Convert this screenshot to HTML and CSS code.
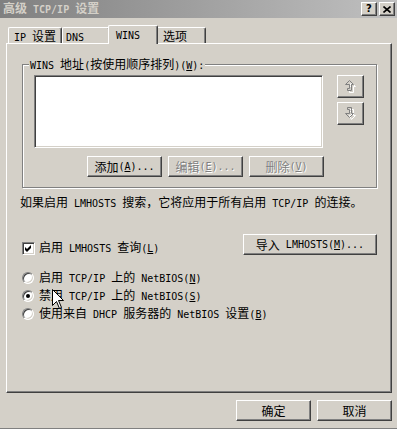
FILE: index.html
```html
<!DOCTYPE html>
<html lang="zh-CN">
<head>
<meta charset="utf-8">
<title>高级 TCP/IP 设置</title>
<link rel="stylesheet" href="styles.css">
</head>
<body>
<div class="window">
  <div class="titlebar">
    <span class="title">高级<span class="l"> TCP/IP </span>设置</span>
    <div class="caption-btns">
      <span class="cbtn help">?</span>
      <span class="cbtn close"><svg width="8" height="7" viewBox="0 0 8 7"><path d="M0.5 0.5 L7.5 6.5 M7.5 0.5 L0.5 6.5" stroke="#000" stroke-width="1.6" fill="none"/></svg></span>
    </div>
  </div>

  <div class="tabs">
    <div class="tab tab-ip"><span class="l">IP </span>设置</div>
    <div class="tab tab-dns"><span class="l">DNS</span></div>
    <div class="tab tab-wins active"><span class="l">WINS</span></div>
    <div class="tab tab-opt">选项</div>
  </div>

  <div class="panel">
    <div class="group">
      <div class="legend"><span class="legend-text"><span class="l">WINS </span>地址<span class="l">(</span>按使用顺序排列<span class="l">)(<u>W</u>):</span></span></div>
      <div class="list-row">
        <div class="listbox"></div>
        <div class="arrows">
          <button class="btn arrow" type="button">
            <svg width="11" height="13" viewBox="0 0 11 13">
              <path d="M5.5 1.5 L9.5 5.5 L7.5 5.5 L7.5 11.5 L3.5 11.5 L3.5 9.5 L5.5 9.5 L5.5 5.5 L3.5 5.5 Z" transform="translate(1,1)" stroke="#fff" fill="none"/>
              <path d="M4.5 0.5 L8.5 4.5 L6.5 4.5 L6.5 10.5 L2.5 10.5 L2.5 8.5 L4.5 8.5 L4.5 4.5 L0.5 4.5 Z" stroke="#808080" fill="none"/>
            </svg>
          </button>
          <button class="btn arrow" type="button">
            <svg width="11" height="13" viewBox="0 0 11 13">
              <path d="M5.5 11.5 L9.5 7.5 L7.5 7.5 L7.5 1.5 L3.5 1.5 L3.5 3.5 L5.5 3.5 L5.5 7.5 L3.5 7.5 Z" transform="translate(1,1)" stroke="#fff" fill="none"/>
              <path d="M4.5 10.5 L8.5 6.5 L6.5 6.5 L6.5 0.5 L2.5 0.5 L2.5 2.5 L4.5 2.5 L4.5 6.5 L0.5 6.5 Z" stroke="#808080" fill="none"/>
            </svg>
          </button>
        </div>
      </div>
      <div class="btn-row">
        <button class="btn" type="button">添加<span class="l">(<u>A</u>)...</span></button>
        <button class="btn disabled" type="button">编辑<span class="l">(<u>E</u>)...</span></button>
        <button class="btn disabled" type="button">删除<span class="l">(<u>V</u>)</span></button>
      </div>
    </div>

    <p class="note">如果启用<span class="l"> LMHOSTS </span>搜索，它将应用于所有启用<span class="l"> TCP/IP </span>的连接。</p>

    <div class="check-row">
      <div class="option check-option">
        <span class="checkbox"><svg width="7" height="7" viewBox="0 0 7 7"><path d="M0 2 L2 4 L6 0 L6 3 L2 7 L0 5 Z" fill="#000"/></svg></span>
        <span>启用<span class="l"> LMHOSTS </span>查询<span class="l">(<u>L</u>)</span></span>
      </div>
      <button class="btn import" type="button">导入<span class="l"> LMHOSTS(<u>M</u>)...</span></button>
    </div>

    <div class="radios">
      <div class="option radio-option"><span class="radio"></span><span>启用<span class="l"> TCP/IP </span>上的<span class="l"> NetBIOS(<u>N</u>)</span></span></div>
      <div class="option radio-option"><span class="radio checked"></span><span>禁用<span class="l"> TCP/IP </span>上的<span class="l"> NetBIOS(<u>S</u>)</span></span></div>
      <div class="option radio-option"><span class="radio"></span><span>使用来自<span class="l"> DHCP </span>服务器的<span class="l"> NetBIOS </span>设置<span class="l">(<u>B</u>)</span></span></div>
    </div>
  </div>

  <div class="dialog-btns">
    <button class="btn" type="button">确定</button>
    <button class="btn" type="button">取消</button>
  </div>

  <svg class="cursor" width="13" height="21" viewBox="0 0 13 21">
    <path d="M0.5 0.5 L0.5 16.5 L4.5 12.5 L7.5 19.5 L9.5 18.5 L6.5 11.5 L11.5 11.5 Z" fill="#fff" stroke="#000"/>
  </svg>
</div>
</body>
</html>
```

FILE: styles.css
```css
html, body {
  margin: 0;
  padding: 0;
}

body {
  width: 397px;
  height: 429px;
  overflow: hidden;
  background: #d4d0c8;
  font-family: "Noto Sans CJK SC", sans-serif;
  font-size: 12px;
  color: #000;
}

.l {
  font-family: "DejaVu Sans Mono", monospace;
  font-size: 10px;
  white-space: pre;
}

u {
  text-decoration: underline;
  text-underline-offset: 1px;
}

.window {
  position: relative;
  width: 397px;
  height: 429px;
  box-sizing: border-box;
  border-bottom: 1px solid #808080;
  display: flex;
  flex-direction: column;
}

/* title bar */
.titlebar {
  height: 18px;
  background: linear-gradient(to right, #808080, #c0c0c0);
  display: flex;
  align-items: center;
  justify-content: space-between;
  padding: 0 2px 0 3px;
}

.title {
  color: #d4d0c8;
  font-weight: bold;
  line-height: 16px;
}

.title .l {
  font-weight: bold;
}

.caption-btns {
  display: flex;
  gap: 2px;
}

.cbtn {
  width: 16px;
  height: 14px;
  box-sizing: border-box;
  background: #d4d0c8;
  border: 1px solid;
  border-color: #fff #404040 #404040 #fff;
  box-shadow: inset -1px -1px 0 #808080;
  display: flex;
  align-items: center;
  justify-content: center;
}

.cbtn.help {
  font-family: "DejaVu Sans", sans-serif;
  font-weight: bold;
  font-size: 10px;
  line-height: 12px;
}

/* tabs */
.tabs {
  display: flex;
  align-items: flex-end;
  height: 18px;
  margin: 7px 0 0 8px;
}

.tab {
  position: relative;
  box-sizing: border-box;
  height: 16px;
  background: #d4d0c8;
  border-top: 1px solid #fff;
  border-left: 1px solid #fff;
  border-right: 1px solid #404040;
  box-shadow: inset -1px 0 0 #808080;
  border-radius: 2px 2px 0 0;
  line-height: 15px;
  white-space: nowrap;
}

.tab-ip { width: 54px; padding-left: 5px; }
.tab-dns { width: 48px; padding-left: 3px; }
.tab-wins { width: 50px; padding-left: 7px; }
.tab-opt { width: 50px; padding-left: 6px; }

.tab.active {
  height: 19px;
  margin: 0 -2px -1px -2px;
  z-index: 1;
  line-height: 15px;
}

/* panel */
.panel {
  box-sizing: border-box;
  width: 386px;
  height: 350px;
  margin-left: 6px;
  background: #d4d0c8;
  border-top: 1px solid #fff;
  border-left: 1px solid #fff;
  border-right: 1px solid #404040;
  border-bottom: 1px solid #404040;
  box-shadow: inset -1px -1px 0 #808080;
  display: flex;
  flex-direction: column;
}

.group {
  box-sizing: border-box;
  width: 355px;
  height: 124px;
  margin: 20px 0 0 15px;
  border: 1px solid #808080;
  box-shadow: inset 1px 1px 0 #fff, 1px 1px 0 #fff;
  display: flex;
  flex-direction: column;
}

.legend {
  height: 14px;
  line-height: 14px;
  margin: -8px 0 0 6px;
}

.legend-text {
  display: inline-block;
  background: #d4d0c8;
  padding: 0 1px;
}

.list-row {
  display: flex;
  margin: 4px 0 0 11px;
}

.listbox {
  box-sizing: border-box;
  width: 289px;
  height: 73px;
  background: #fff;
  border: 1px solid;
  border-color: #808080 #fff #fff #808080;
  box-shadow: inset 1px 1px 0 #404040, inset -1px -1px 0 #d4d0c8;
}

.arrows {
  display: flex;
  flex-direction: column;
  gap: 4px;
  margin-left: 14px;
}

.btn {
  box-sizing: border-box;
  margin: 0;
  padding: 0;
  height: 21px;
  width: 75px;
  background: #d4d0c8;
  border: 1px solid;
  border-color: #fff #404040 #404040 #fff;
  box-shadow: inset -1px -1px 0 #808080;
  font-family: inherit;
  font-size: 12px;
  color: #000;
  display: flex;
  align-items: center;
  justify-content: center;
  line-height: 16px;
  white-space: nowrap;
}

.btn.arrow {
  width: 27px;
  height: 23px;
}

.btn.disabled {
  color: #808080;
  text-shadow: 1px 1px 0 #fff;
}

.btn-row {
  display: flex;
  justify-content: flex-end;
  gap: 6px;
  width: 290px;
  margin: 8px 0 0 11px;
}

.note {
  margin: 6px 0 0 13px;
  line-height: 16px;
  white-space: nowrap;
}

.check-row {
  display: flex;
  justify-content: space-between;
  align-items: flex-start;
  width: 355px;
  margin: 22px 0 0 15px;
}

.option {
  display: flex;
  align-items: center;
  gap: 4px;
  line-height: 16px;
  white-space: nowrap;
}

.check-option {
  margin-top: 5px;
}

.checkbox {
  box-sizing: border-box;
  width: 13px;
  height: 13px;
  background: #fff;
  border: 1px solid;
  border-color: #808080 #fff #fff #808080;
  box-shadow: inset 1px 1px 0 #404040, inset -1px -1px 0 #d4d0c8;
  display: flex;
  align-items: center;
  justify-content: center;
}

.btn.import {
  width: 134px;
}

.radios {
  display: flex;
  flex-direction: column;
  margin: 12px 0 0 15px;
}

.radio-option {
  height: 18px;
  gap: 5px;
}

.radio {
  box-sizing: border-box;
  width: 12px;
  height: 12px;
  border-radius: 50%;
  background: #fff;
  border: 1px solid;
  border-color: #808080 #fff #fff #808080;
  box-shadow: inset 1px 1px 0 #404040, inset -1px -1px 0 #d4d0c8;
  display: flex;
  align-items: center;
  justify-content: center;
}

.radio.checked::after {
  content: "";
  width: 4px;
  height: 4px;
  border-radius: 50%;
  background: #000;
}

.dialog-btns {
  display: flex;
  justify-content: flex-end;
  gap: 6px;
  margin-top: 7px;
  padding-right: 5px;
}

.cursor {
  position: absolute;
  left: 52px;
  top: 289px;
}
```
